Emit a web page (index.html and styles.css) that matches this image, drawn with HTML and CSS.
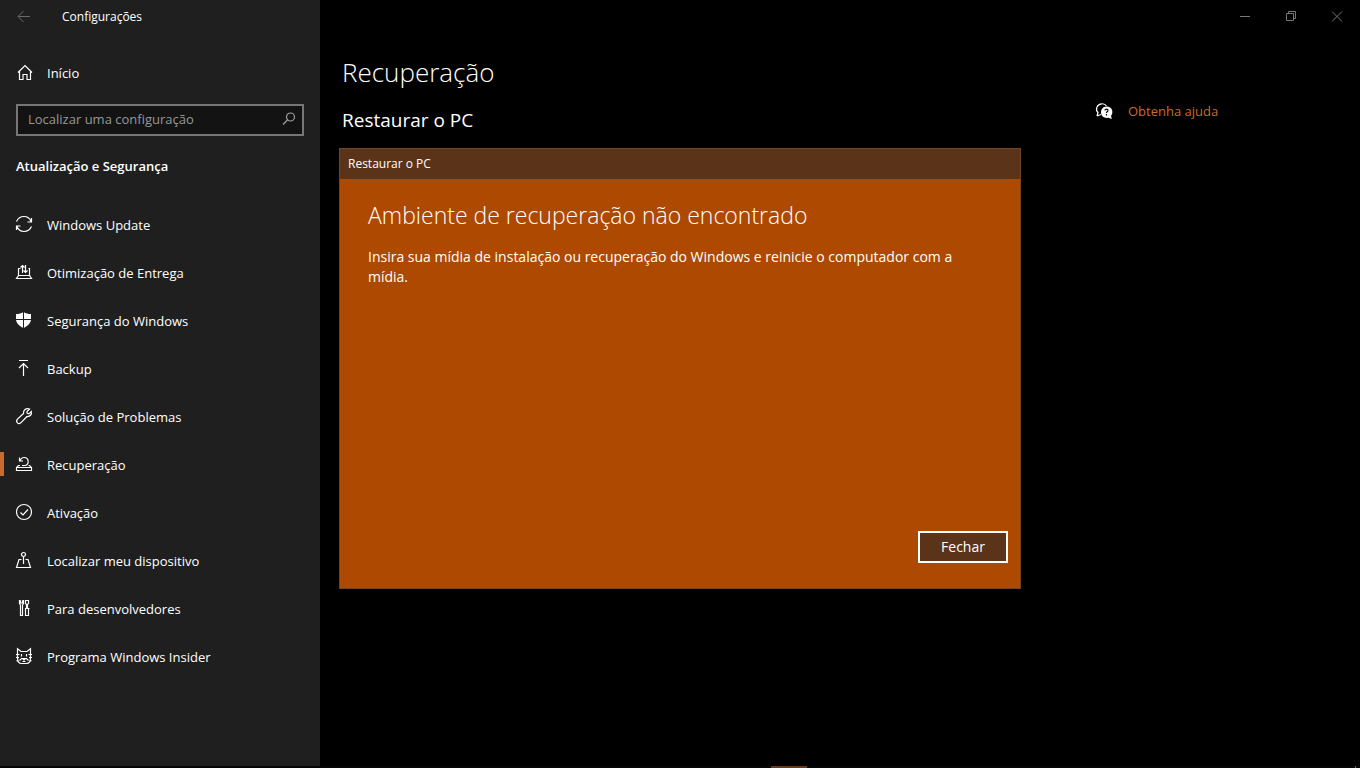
FILE: index.html
```html
<!DOCTYPE html>
<html lang="pt-BR">
<head>
  <meta charset="UTF-8">
  <meta name="viewport" content="width=device-width, initial-scale=1.0">
  <title>Configurações</title>
  <link rel="stylesheet" href="styles.css">
</head>
<body>

  <div class="window">
    <aside class="sidebar">
      <div class="titlebar">
        <button class="back" type="button" aria-label="Voltar" disabled>
          <svg class="icon" viewBox="0 0 16 16"><path d="M14 7.500H2.500M7.500 2L2 7.500L7.500 13"/></svg>
        </button>
        <span class="app-name">Configurações</span>
      </div>

      <a class="nav-link home" href="#">
        <svg class="icon" viewBox="0 0 16 16"><path d="M2 8.500L9 1.500l7 7M3.500 7.500v8h3.500v-5h4v5h3.500v-8"/></svg>
        <span>Início</span>
      </a>

      <form class="search">
        <input type="text" aria-label="Localizar uma configuração" placeholder="Localizar uma configuração">
        <button type="button" aria-label="Pesquisar">
          <svg class="icon" viewBox="0 0 16 16"><circle cx="10.500" cy="6" r="4"/><path d="M7.500 9L3 13.500"/></svg>
        </button>
      </form>

      <h2 class="section">Atualização e Segurança</h2>

      <nav class="nav">
        <a class="nav-link" href="#">
          <svg class="icon" viewBox="0 0 16 16"><path d="M.5 5.500C2 2.200 4.500.5 8 .5c3.200 0 5.800 1.800 7 5M15.500 10.500c-1.500 3.300-4 5-7.500 5-3.200 0-5.800-1.800-7-5M15.500 2v4h-4M.5 14v-4h4"/></svg>
          <span>Windows Update</span>
        </a>
        <a class="nav-link" href="#">
          <svg class="icon" viewBox="0 0 16 16"><path d="M4.500 4.500h-2v7h11v-7h-1M2.500 11.500L.5 14.500h15l-2-3M6.500 9V1.500M4.500 3.500l2-2 2 2M9.500 1v7M7.500 6.500l2 2 2-2"/></svg>
          <span>Otimização de Entrega</span>
        </a>
        <a class="nav-link" href="#">
          <svg class="icon" viewBox="0 0 16 16"><path class="solid" d="M0 2c3 0 5-.5 7.500-2C10 1.500 12 2 15 2v5c0 4-3 7-7.500 9C3 14 0 11 0 7z"/><path class="cut" d="M7.500 0v16M0 7.500h15"/></svg>
          <span>Segurança do Windows</span>
        </a>
        <a class="nav-link" href="#">
          <svg class="icon" viewBox="0 0 16 16"><path d="M3 .5h9M7.500 16V3.500M3 8l4.500-4.500L12 8"/></svg>
          <span>Backup</span>
        </a>
        <a class="nav-link" href="#">
          <svg class="icon" viewBox="0 0 16 16"><path d="M13.500 1L11 3.500v1.500l1 .7h1.300L15.300 3.500c.8 3-1.300 5.300-4.300 5l-6.200 6.300c-2.400 2-5.400-.8-3.600-3.500L7.500 5.500C7 2 10 -.3 13.500 1z"/></svg>
          <span>Solução de Problemas</span>
        </a>
        <a class="nav-link active" href="#">
          <svg class="icon" viewBox="0 0 16 16"><path d="M4 9.500H2.500l-2 2v3h15v-3l-2-2H12.500M.5 11.500h15M3.500 1.500v3.500h3.500M4 5C4.800 2.500 6.300 1.500 8.200 1.500c4.800 0 5.300 6.500 1.300 8H6"/></svg>
          <span>Recuperação</span>
        </a>
        <a class="nav-link" href="#">
          <svg class="icon" viewBox="0 0 16 16"><circle cx="8" cy="8" r="7.500"/><path d="M4.500 8.500L7 11l5-5.500"/></svg>
          <span>Ativação</span>
        </a>
        <a class="nav-link" href="#">
          <svg class="icon" viewBox="0 0 16 16"><circle cx="7.500" cy="2.500" r="2"/><path d="M7.500 4.500V12M5.500 7.500H3l-2.500 8h14l-2.500-8H9.500"/></svg>
          <span>Localizar meu dispositivo</span>
        </a>
        <a class="nav-link" href="#">
          <svg class="icon" viewBox="0 0 16 16"><path d="M4.500.5h-1v3l1 1.500v10.500h2V5l1-1.500v-3h-1M4.500.5v2.500h2V.5M9.500.5h3v3l-1 1v4h-1v-4l-1-1zM9.500 8.500h3v7h-3zM9 8.500h4.500"/></svg>
          <span>Para desenvolvedores</span>
        </a>
        <a class="nav-link" href="#">
          <svg class="icon" viewBox="0 0 16 16"><path d="M1.500 10V.8l3.500 2.700h6l3.500-2.700V10c0 3.500-1.500 5.500-4 5.500h-5c-2.500 0-4-2-4-5.500zM0 6.500h3.500M0 9.500h3M12.500 6.500H16M13 9.500h3M.5 13l2-1M15.500 13l-2-1M5.500 6v2.500M10.500 6v2.500M3.500 12.500l2-2h5l2 2M6.500 10.500L8 12l1.500-1.500M6.500 13.500h3"/></svg>
          <span>Programa Windows Insider</span>
        </a>
      </nav>
    </aside>

    <main class="content">
      <div class="caption-buttons">
        <button type="button" aria-label="Minimizar"><svg viewBox="0 0 11 11"><path d="M0 5.500h10"/></svg></button>
        <button type="button" aria-label="Restaurar"><svg viewBox="0 0 11 11"><path d="M.5 2.500h7v7h-7zM2.500 2.500v-2h7v7h-2"/></svg></button>
        <button type="button" aria-label="Fechar janela"><svg viewBox="0 0 11 11"><path d="M0 .5l10 10M10 .5l-10 10"/></svg></button>
      </div>

      <div class="columns">
        <section class="page">
          <h1>Recuperação</h1>
          <h2>Restaurar o PC</h2>
        </section>

        <div class="help">
          <svg class="icon" viewBox="0 0 16 16"><path d="M1 13l1-3.500C-1 7 .8 1.200 5.500.8 8 .5 9.500 1.500 10.500 3M1 13L5 11.500"/><path class="solid" d="M10.500 3.500c6.500 0 7 7 4.500 9.300l.8 3.200-3.300-1.200C7.500 15.500 5 12.500 5 9.500c0-3 2-6 5.500-6z"/><path class="question" d="M9 7.500C9 5.500 12.300 5.700 12 7.500c-.1 1-1.500 1.200-1.500 2.500M10.500 11v1.500"/></svg>
          <a href="#">Obtenha ajuda</a>
        </div>
      </div>
    </main>
  </div>

  <div class="taskbar"><span class="task"></span><span class="desktop-edge"></span></div>

  <div class="overlay">
    <div class="dialog" role="dialog" aria-labelledby="dialog-title">
      <header>Restaurar o PC</header>
      <div class="dialog-body">
        <h2 id="dialog-title">Ambiente de recuperação não encontrado</h2>
        <p>Insira sua mídia de instalação ou recuperação do Windows e reinicie o computador com a mídia.</p>
        <button class="close" type="button">Fechar</button>
      </div>
    </div>
  </div>

</body>
</html>
```
FILE: styles.css
```css
* {
  box-sizing: border-box;
}
body {
  margin: 0;
  min-height: 100vh;
  display: flex;
  flex-direction: column;
  background: #000;
  color: #fff;
  font-family: "Segoe UI", "Open Sans", "Noto Sans", sans-serif;
  font-size: 13px;
  line-height: 20px;
}
h1, h2, p {
  margin: 0;
}
button {
  padding: 0;
  border: 0;
  background: none;
  color: inherit;
  font: inherit;
}
svg {
  display: block;
  fill: none;
  stroke: currentColor;
}
.icon {
  width: 16px;
  height: 16px;
  flex: none;
  overflow: visible;
  stroke-width: 1.2;
}
.solid {
  fill: currentColor;
  stroke: none;
}
.cut {
  stroke: #1f1f1f;
  stroke-width: 1;
}
.question {
  stroke: #000;
}

.window {
  flex: 1;
  display: flex;
}

/* barra lateral */
.sidebar {
  width: 320px;
  flex: none;
  background: #1f1f1f;
}
.titlebar {
  height: 34px;
  display: flex;
  align-items: center;
  padding-left: 16px;
  gap: 30px;
}
.back {
  color: #6b6b6b;
}
.back .icon {
  stroke-width: 1;
}
.app-name {
  font-size: 12px;
}
.nav-link {
  height: 48px;
  display: flex;
  align-items: center;
  gap: 15px;
  padding: 0 16px;
  color: #fff;
  text-decoration: none;
}
.nav-link .icon {
  margin-bottom: 2px;
}
.home {
  margin-top: 15px;
}
.active {
  background: linear-gradient(#ca6b2b, #ca6b2b) 0 11px / 4px 24px no-repeat;
}
.search {
  display: flex;
  align-items: center;
  height: 32px;
  margin: 7px 16px 0;
  padding: 0 6px 2px 0;
  border: 2px solid #767676;
  background: #131313;
  color: #a0a0a0;
}
.search input {
  flex: 1;
  min-width: 0;
  padding: 0 10px;
  border: 0;
  outline: 0;
  background: none;
  color: #fff;
  font: inherit;
}
.search input::placeholder {
  color: #979797;
  opacity: 1;
}
.section {
  margin: 20px 16px 25px;
  font-size: 13px;
  font-weight: 600;
}

/* conteudo */
.content {
  flex: 1;
}
.caption-buttons {
  display: flex;
  justify-content: flex-end;
}
.caption-buttons button {
  width: 46px;
  height: 32px;
  display: grid;
  place-items: center;
  color: #777;
}
.caption-buttons svg {
  width: 11px;
  height: 11px;
}
.columns {
  display: flex;
  padding: 20px 22px 0;
}
.page {
  flex: 1;
}
.page h1 {
  font-size: 26px;
  font-weight: 350;
  line-height: 40px;
}
.page h2 {
  margin-top: 14px;
  font-size: 19px;
  font-weight: 400;
  line-height: 28px;
}
.help {
  width: 242px;
  display: flex;
  align-items: center;
  gap: 16px;
  height: 20px;
  margin-top: 49px;
}
.help a {
  color: #ca6b2b;
  text-decoration: none;
}

.taskbar {
  height: 2px;
  display: flex;
  background: #050505;
}
.task {
  width: 36px;
  margin-left: 771px;
  background: #6b3914;
}
.desktop-edge {
  width: 1px;
  margin-left: auto;
  margin-right: 4px;
  background: #6b6b6b;
}

/* caixa de dialogo */
.overlay {
  position: fixed;
  inset: 0;
  display: flex;
  align-items: center;
  justify-content: center;
  padding-bottom: 31px;
}
.dialog {
  width: 682px;
  min-height: 441px;
  display: flex;
  flex-direction: column;
  border: 1px solid #6f4527;
  background: #ad4900;
}
.dialog header {
  height: 30px;
  padding: 5px 8px;
  background: #5b3319;
  font-size: 12px;
}
.dialog-body {
  flex: 1;
  display: flex;
  flex-direction: column;
  padding: 20px 12px 25px 28px;
}
.dialog-body h2 {
  font-size: 23px;
  font-weight: 350;
  line-height: 32px;
}
.dialog-body p {
  margin-top: 16px;
  padding-right: 28px;
  font-size: 14px;
}
.close {
  width: 90px;
  height: 32px;
  margin-top: auto;
  align-self: flex-end;
  border: 2px solid #fff;
  background: #5b3319;
  font-size: 14px;
}
```
